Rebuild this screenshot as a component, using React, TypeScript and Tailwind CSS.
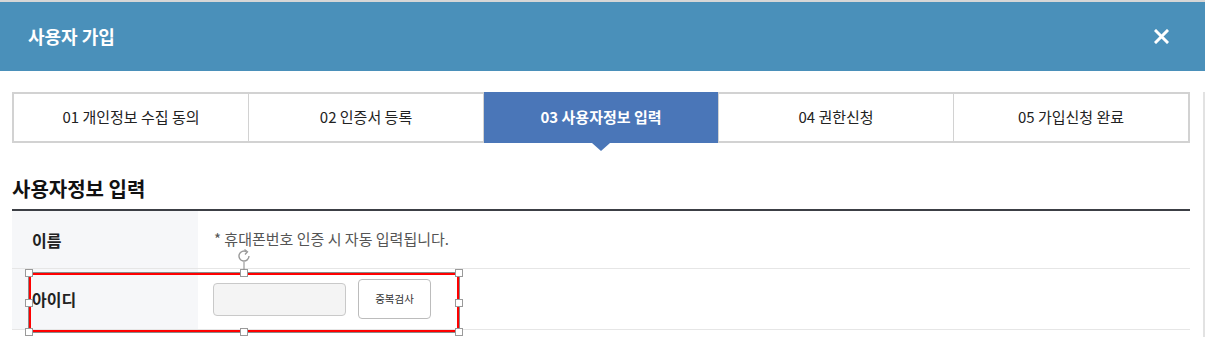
import React from "react";

const font = { fontFamily: '"Noto Sans CJK KR", "Noto Sans", sans-serif' };

const steps = ["01 개인정보 수집 동의", "02 인증서 등록", "03 사용자정보 입력", "04 권한신청", "05 가입신청 완료"];

function Handle({ className }: { className: string }) {
  return <div className={`absolute w-[8px] h-[8px] bg-white border border-[#9a9a9a] ${className}`} />;
}

export default function App() {
  return (
    <div style={font} className="w-[1205px] h-[337px] overflow-hidden bg-white border-t-2 border-[#d6d6d6] relative">
      <div className="h-[69px] bg-[#4a90ba] flex items-center justify-between pl-[28px] pr-[36px]">
        <span className="text-white text-[18px] font-bold">사용자 가입</span>
        <svg width="15" height="15" viewBox="0 0 15 15">
          <path d="M2 2 L13 13 M13 2 L2 13" stroke="white" strokeWidth="3" strokeLinecap="square" />
        </svg>
      </div>
      <div className="border-r-2 border-[#e2e2e2] pl-[12px] pr-[13px] h-[266px]">
        <div className="mt-[21px] flex h-[51px] border-2 border-[#d2d2d2]">
          {steps.map((s, i) => {
            const active = i === 2;
            return (
              <div
                key={s}
                className={`relative flex-1 flex items-center justify-center text-[15px] ${i > 0 ? "border-l border-[#d2d2d2]" : ""} ${active ? "bg-[#4a76b8] text-white font-bold -my-[2px]" : "text-[#222]"}`}
              >
                {s}
                {active && (
                  <div className="absolute left-1/2 -translate-x-1/2 top-full w-0 h-0 border-l-[9px] border-r-[9px] border-t-[8px] border-l-transparent border-r-transparent border-t-[#4a76b8]" />
                )}
              </div>
            );
          })}
        </div>
        <div className="mt-[32px] pb-[7px] border-b-2 border-[#3c3f45]">
          <h2 className="text-[20px] font-bold leading-[27px] text-[#111]">사용자정보 입력</h2>
        </div>
        <div className="flex h-[58px] border-b border-[#e6e6e6]">
          <div className="w-[186px] bg-[#f6f7f9] flex items-center pl-[20px] text-[16px] font-bold text-[#222]">이름</div>
          <div className="flex items-center pl-[16px] text-[15px] text-[#555]">* 휴대폰번호 인증 시 자동 입력됩니다.</div>
        </div>
        <div className="flex h-[61px] border-b border-[#e6e6e6]">
          <div className="w-[186px] bg-[#f6f7f9] flex items-center pl-[20px] text-[16px] font-bold text-[#222]">아이디</div>
          <div className="flex items-center pl-[15px] gap-[12px]">
            <input className="w-[133px] h-[33px] bg-[#f4f4f4] border border-[#c9c9c9] rounded-[4px] outline-none" />
            <button className="w-[73px] h-[40px] bg-white border border-[#bcbcbc] rounded-[4px] text-[10.5px] text-[#333]">중복검사</button>
          </div>
        </div>
      </div>
      {/* selection overlay */}
      <div className="absolute left-[28px] top-[270px] w-[432px] h-[61px] border border-[#8a8a8a]">
        <div className="absolute inset-0 border-2 border-[#ff0000]" />
        <Handle className="-left-[4px] -top-[4px]" />
        <Handle className="left-1/2 -translate-x-1/2 -top-[4px]" />
        <Handle className="-right-[4px] -top-[4px]" />
        <Handle className="-left-[4px] top-1/2 -translate-y-1/2" />
        <Handle className="-right-[4px] top-1/2 -translate-y-1/2" />
        <Handle className="-left-[4px] -bottom-[4px]" />
        <Handle className="left-1/2 -translate-x-1/2 -bottom-[4px]" />
        <Handle className="-right-[4px] -bottom-[4px]" />
        <div className="absolute left-1/2 -translate-x-1/2 -top-[11px] w-px h-[8px] bg-[#8a8a8a]" />
        <svg className="absolute left-1/2 -translate-x-1/2 -top-[25px]" width="16" height="16" viewBox="0 0 16 16">
          <path d="M13 8 A5 5 0 1 1 10.5 3.7" fill="none" stroke="#9a9a9a" strokeWidth="1.4" />
          <path d="M8.5 1.5 L11.5 3.8 L9 6.5" fill="none" stroke="#9a9a9a" strokeWidth="1.3" />
        </svg>
      </div>
    </div>
  );
}
